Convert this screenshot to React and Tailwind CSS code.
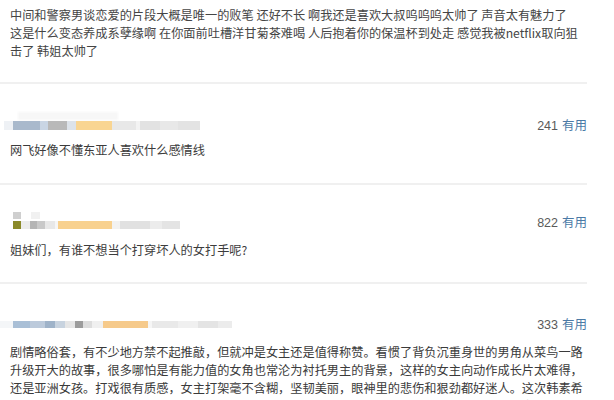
import React from "react";

const bar1 = [
  "w-[4px] bg-[#ffffff]",
  "w-[9px] bg-[#eef1f5]",
  "w-[27px] bg-[#a9b9cc]",
  "w-[8px] bg-[#c9d5e4]",
  "w-[19px] bg-[#b9b9b9]",
  "w-[9px] bg-[#dde3ea]",
  "w-[36px] bg-[#f9d592]",
  "w-[24px] bg-[#e8e8e8]",
  "w-[4px] bg-[#f3f3f3]",
  "w-[20px] bg-[#e2e2e2]",
  "w-[18px] bg-[#e8e8e8]",
  "w-[22px] bg-[#e3e3e3]",
];

const bar2 = [
  "w-[13px] bg-[#ffffff]",
  "w-[8px] bg-[#8b8a2a]",
  "w-[9px] bg-[#ececec]",
  "w-[7px] bg-[#b5b5b5]",
  "w-[8px] bg-[#c9c9c9]",
  "w-[10px] bg-[#e8e8e8]",
  "w-[3px] bg-[#f6f6f6]",
  "w-[54px] bg-[#f8d18f]",
  "w-[8px] bg-[#f2f2f2]",
  "w-[30px] bg-[#e1e1e1]",
  "w-[12px] bg-[#ececec]",
  "w-[18px] bg-[#e4e4e4]",
];

const bar3 = [
  "w-[13px] bg-[#f4f6f8]",
  "w-[17px] bg-[#a9bfd6]",
  "w-[15px] bg-[#bccadb]",
  "w-[10px] bg-[#9fb3c9]",
  "w-[10px] bg-[#c8d3df]",
  "w-[10px] bg-[#e6e6e6]",
  "w-[8px] bg-[#9c9c9c]",
  "w-[9px] bg-[#dddddd]",
  "w-[11px] bg-[#f0f0f0]",
  "w-[45px] bg-[#f6ca8b]",
  "w-[4px] bg-[#f6f6f6]",
  "w-[26px] bg-[#e9e9e9]",
  "w-[20px] bg-[#f0f0f0]",
  "w-[20px] bg-[#e4e4e4]",
  "w-[14px] bg-[#ececec]",
];

function Mosaic({ blocks, h }) {
  return (
    <div className={"flex blur-[0.6px] " + h}>
      {blocks.map((c, i) => (
        <div key={i} className={"h-full " + c} />
      ))}
    </div>
  );
}

function Count({ n }) {
  return (
    <div className="text-[12.5px] leading-[14px] whitespace-nowrap font-['Liberation_Sans','Noto_Sans_CJK_SC',sans-serif]">
      <span className="text-[#5a5a5a]">{n}</span>
      <span className="ml-[4px] text-[#4b7aa6] font-['Noto_Sans_CJK_SC',sans-serif]">有用</span>
    </div>
  );
}

function Divider() {
  return <div className="h-[2px] bg-[#f0f0f0]" />;
}

export default function App() {
  return (
    <div className="w-[614px] h-[400px] overflow-hidden bg-white font-['Noto_Sans_CJK_SC',sans-serif]">
      <div className="w-[587px]">
        {/* Comment 1 (cut) */}
        <div className="pt-[6px] pb-[22px] pl-[10px] text-[12.2px] leading-[18px] text-[#454545] whitespace-nowrap">
          中间和警察男谈恋爱的片段大概是唯一的败笔 还好不长 啊我还是喜欢大叔呜呜呜太帅了 声音太有魅力了
          <br />
          这是什么变态养成系孽缘啊 在你面前吐槽洋甘菊茶难喝 人后抱着你的保温杯到处走 感觉我被netflix取向狙
          <br />
          击了 韩姐太帅了
        </div>
        <Divider />

        {/* Comment 2 */}
        <div className="pt-[34px] pb-[24px]">
          <div className="flex items-center justify-between h-[14px]">
            <div className="relative">
              <div className="absolute left-[18px] top-[-9px] w-[100px] h-[8px] bg-[#f7f7f7] blur-[1px]" />
              <Mosaic blocks={bar1} h="h-[9px]" />
            </div>
            <Count n="241" />
          </div>
          <div className="mt-[9px] pl-[10px] text-[12.2px] leading-[18px] text-[#3c3c3c] whitespace-nowrap">
            网飞好像不懂东亚人喜欢什么感情线
          </div>
        </div>
        <Divider />

        {/* Comment 3 */}
        <div className="pt-[27px] pb-[23px]">
          <div className="flex items-end justify-between">
            <div className="flex flex-col gap-[2px] pb-[1px]">
              <div className="flex h-[7px] blur-[0.6px]">
                <div className="w-[13px]" />
                <div className="w-[8px] h-full bg-[#cfcfcf]" />
                <div className="w-[10px]" />
                <div className="w-[9px] h-full bg-[#f1f1f1]" />
              </div>
              <Mosaic blocks={bar2} h="h-[8px]" />
            </div>
            <Count n="822" />
          </div>
          <div className="mt-[11px] pl-[10px] text-[12.2px] leading-[18px] text-[#3c3c3c] whitespace-nowrap">
            姐妹们，有谁不想当个打穿坏人的女打手呢?
          </div>
        </div>
        <Divider />

        {/* Comment 4 */}
        <div className="pt-[33px]">
          <div className="flex items-center justify-between h-[14px]">
            <Mosaic blocks={bar3} h="h-[7px]" />
            <Count n="333" />
          </div>
          <div className="mt-[12px] pl-[10px] text-[12.2px] leading-[18px] text-[#3a3a3a] whitespace-nowrap">
            剧情略俗套，有不少地方禁不起推敲，但就冲是女主还是值得称赞。看惯了背负沉重身世的男角从菜鸟一路
            <br />
            升级开大的故事，很多哪怕是有能力值的女角也常沦为衬托男主的背景，这样的女主向动作成长片太难得，
            <br />
            还是亚洲女孩。打戏很有质感，女主打架毫不含糊，坚韧美丽，眼神里的悲伤和狠劲都好迷人。这次韩素希
            <br />
            饰演角色和她本人的气质非常贴合，把这个角色演活了，期待续集里能让角色有更多故事线，一定要
          </div>
        </div>
      </div>
    </div>
  );
}
